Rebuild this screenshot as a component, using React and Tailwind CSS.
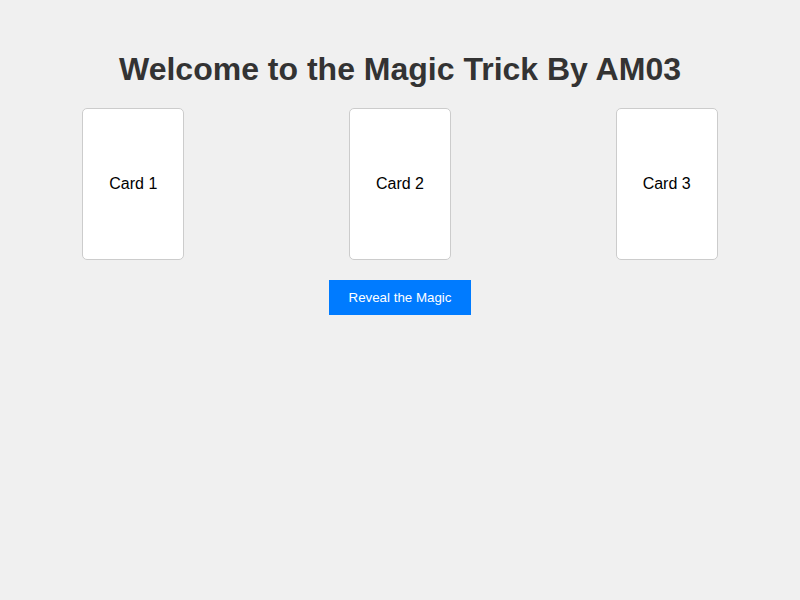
import React from 'react';

const cards = ['Card 1', 'Card 2', 'Card 3'];

const App = () => {
  return (
    <div className="min-h-screen bg-[#f0f0f0] pt-[50px] text-center font-['Liberation_Sans',Arial,sans-serif]">
      <h1 className="text-[32px] leading-[37px] font-bold text-[#333] mb-[20px] pt-px">
        Welcome to the Magic Trick By AM03
      </h1>

      {/* Cards */}
      <div className="flex justify-around">
        {cards.map((c) => (
          <div key={c}
            className="w-[102px] h-[152px] bg-white border border-[#ccc] rounded-[5px] flex items-center justify-center text-base text-black">
            {c}
          </div>
        ))}
      </div>

      <button className="mt-5 h-[35px] px-5 bg-[#007bff] text-white text-[13.333px]">
        Reveal the Magic
      </button>
    </div>
  );
};

export default App;
